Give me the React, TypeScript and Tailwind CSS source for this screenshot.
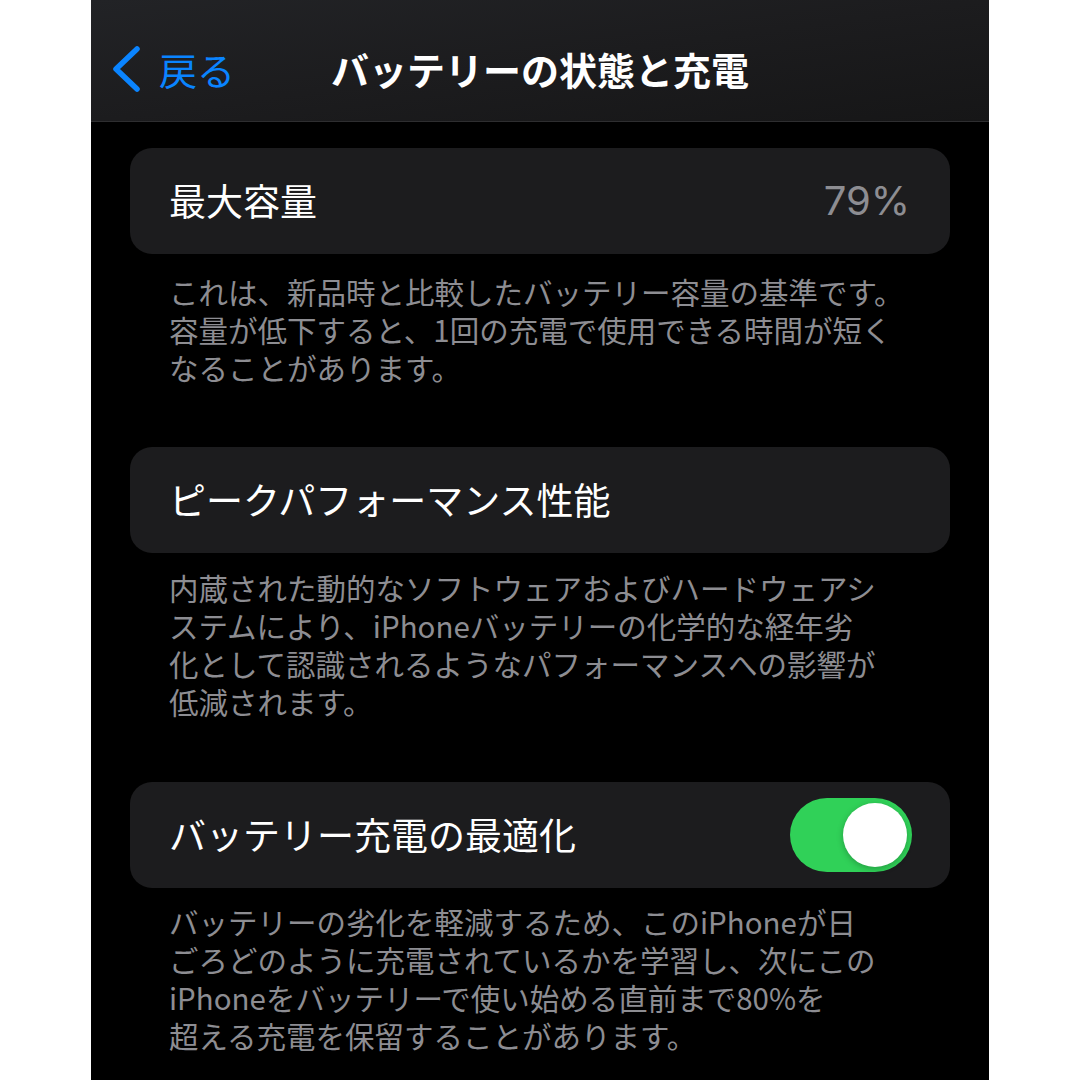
import React from 'react';

const jp = { fontFamily: '"Noto Sans CJK JP", "Noto Sans", sans-serif' };

const Card: React.FC<{ children: React.ReactNode }> = ({ children }) => (
  <div className="mx-[39px] flex h-[106px] items-center justify-between rounded-[22px] bg-[#1c1c1e] pl-[39px] pr-[38px]">
    {children}
  </div>
);

const Footer: React.FC<{ lines: string[]; top: string }> = ({ lines, top }) => (
  <p className={`mx-[39px] pl-[39px] text-[29.5px] leading-[38px] text-[#8d8d92] ${top}`}>
    {lines.map((l, i) => (
      <span key={i} className="block whitespace-nowrap">
        {l}
      </span>
    ))}
  </p>
);

export default function App() {
  return (
    <div className="flex min-h-[1080px] w-[1080px] bg-white" style={jp}>
      <div className="ml-[91px] flex h-[1080px] w-[898px] flex-col overflow-hidden bg-black">
        <header className="relative flex h-[122px] shrink-0 items-center border-b border-[#2e2e30] bg-gradient-to-br from-[#222326] via-[#1c1c1e] to-[#161617] pt-[16px]">
          <div className="ml-[20px] flex items-center gap-[18px] text-[#0a84ff]">
            <svg width="30" height="48" viewBox="0 0 30 48" fill="none">
              <path d="M26 4 L5 24 L26 44" stroke="#0a84ff" strokeWidth="5.5" strokeLinecap="round" strokeLinejoin="round" />
            </svg>
            <span className="text-[38px] leading-none">戻る</span>
          </div>
          <h1 className="absolute left-[240px] text-[38px] font-bold leading-none text-white">
            バッテリーの状態と充電
          </h1>
        </header>

        <div className="pt-[26px]">
          <Card>
            <span className="text-[37px] text-white">最大容量</span>
            <span className="mr-[2px] text-[40px] text-[#8d8d92]" style={{ fontFamily: 'Inter, "Noto Sans", sans-serif' }}>79%</span>
          </Card>
          <Footer
            top="pt-[18px]"
            lines={[
              'これは、新品時と比較したバッテリー容量の基準です。',
              '容量が低下すると、1回の充電で使用できる時間が短く',
              'なることがあります。',
            ]}
          />

          <div className="h-[61px]" />
          <Card>
            <span className="text-[37px] text-white">ピークパフォーマンス性能</span>
          </Card>
          <Footer
            top="pt-[15px]"
            lines={[
              '内蔵された動的なソフトウェアおよびハードウェアシ',
              'ステムにより、iPhoneバッテリーの化学的な経年劣',
              '化として認識されるようなパフォーマンスへの影響が',
              '低減されます。',
            ]}
          />

          <div className="h-[62px]" />
          <Card>
            <span className="text-[37px] text-white">バッテリー充電の最適化</span>
            <div className="flex h-[74px] w-[122px] items-center justify-end rounded-full bg-[#30d158] pr-[5px]">
              <div className="h-[64px] w-[64px] rounded-full bg-white shadow-[0_2px_6px_rgba(0,0,0,0.25)]" />
            </div>
          </Card>
          <Footer
            top="pt-[14px]"
            lines={[
              'バッテリーの劣化を軽減するため、このiPhoneが日',
              'ごろどのように充電されているかを学習し、次にこの',
              'iPhoneをバッテリーで使い始める直前まで80%を',
              '超える充電を保留することがあります。',
            ]}
          />
        </div>
      </div>
    </div>
  );
}
